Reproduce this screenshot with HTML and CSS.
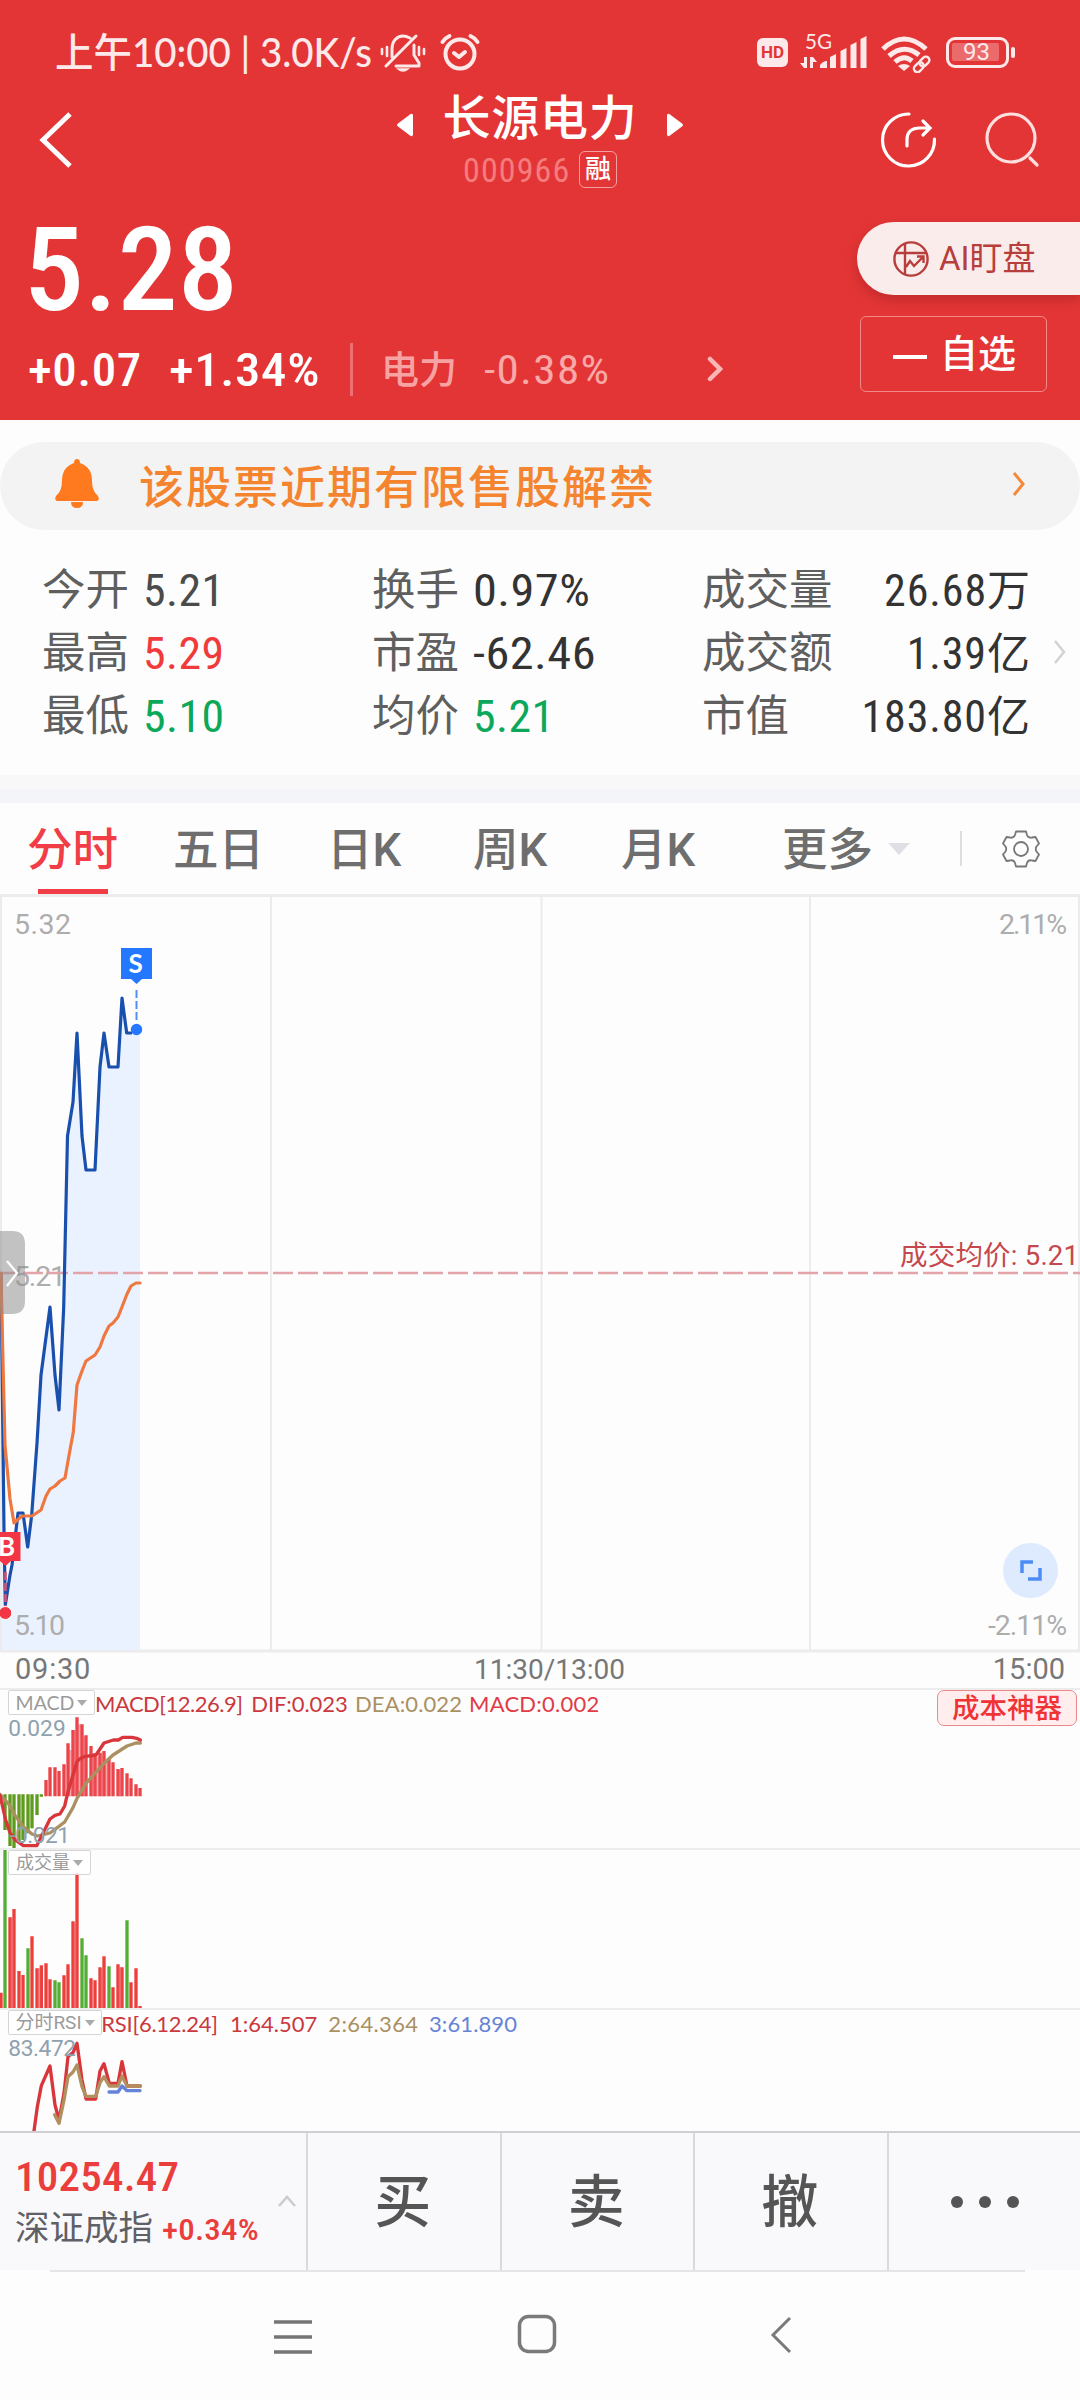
FILE: index.html
```
<!DOCTYPE html>
<html lang="zh-CN">
<head>
<meta charset="utf-8">
<title>长源电力 000966</title>
<link rel="stylesheet" href="styles.css">
</head>
<body>
<header class="header">
  <div class="status">
    <span class="status-text"><svg width="326" height="60"><text x="1" y="37" textLength="317" lengthAdjust="spacingAndGlyphs">上午10:00 | 3.0K/s</text></svg></span>
    <svg class="status-mute" width="46" height="42" viewBox="0 0 46 42" fill="none" stroke="#fde9e9" stroke-width="3" stroke-linecap="round">
      <path d="M6 33 36 3M12 24V16C12 8 17 3 23 3C26 3 28 4 30 5M34 12V22L39 30V33H16" stroke-linejoin="round"/>
      <path d="M2 16V21M7 14V23M44 16V21M39 14V22" stroke-width="2.6"/>
      <path d="M18 36H28Q23 40 18 36Z" fill="#fde9e9" stroke-width="1.5"/>
    </svg>
    <svg class="status-alarm" width="42" height="40" viewBox="0 0 42 40" fill="none" stroke="#fde9e9" stroke-width="4" stroke-linecap="round" stroke-linejoin="round">
      <circle cx="21" cy="21" r="14.5"/><path d="M15 20 20 24 26 19M3.500 9Q6 5 10.500 3M38.500 9Q36 5 31.500 3"/>
    </svg>
    <span class="hd">HD</span>
    <svg class="signal" width="72" height="50" viewBox="0 -6 72 50" fill="#fde9e9">
      <text x="5" y="18" font-size="21" textLength="27" lengthAdjust="spacingAndGlyphs">5G</text>
      <path d="M4 26h3v11h-3l-4-5h4zM10 37V26h3l4 5h-4v6z"/>
      <path d="M20 37v-3q3-4 7-4v7zM30 37V26l6-3v14zM40.500 37V20l6-3v20zM50.500 37V14l6-3v26zM60.500 37V8l6-3v32z"/>
    </svg>
    <svg class="wifi" width="52" height="38" viewBox="0 0 52 38" fill="none" stroke="#fde9e9" stroke-width="5">
      <path d="M3 14Q24-6 46 14M9 21Q24 8 39 20M15 27Q24 19 32 26"/><path d="M18 31Q24 27 30 31L24 36Z" fill="#fde9e9" stroke="none"/>
      <g stroke-width="2.400" transform="rotate(-45 42 29)"><rect x="32" y="25.500" width="11" height="7" rx="3.500"/><rect x="40" y="25.500" width="11" height="7" rx="3.500"/></g>
    </svg>
    <span class="battery"><span class="battery-fill">93</span></span><span class="battery-nub"></span>
  </div>

  <div class="nav">
    <svg class="back" width="34" height="58" viewBox="0 0 34 58" fill="none" stroke="#fff" stroke-width="5"><path d="M31 3 4 29 31 55"/></svg>
    <div class="title-block">
      <div class="title-row">
        <svg width="16" height="24" viewBox="0 0 16 24" fill="#fff"><path d="M16 2V22Q15 24 13 22.500L1 13.500Q-1 12 1 10.500L13 1.500Q15 0 16 2Z"/></svg>
        <h1 class="title">长源电力</h1>
        <svg width="16" height="24" viewBox="0 0 16 24" fill="#fff"><path d="M0 2V22Q1 24 3 22.500L15 13.500Q17 12 15 10.500L3 1.500Q1 0 0 2Z"/></svg>
      </div>
      <div class="code-row"><span class="code">000966</span><span class="margin-tag">融</span></div>
    </div>
    <svg class="share" width="58" height="58" viewBox="0 0 58 58" fill="none" stroke="#fff" stroke-width="3.200" stroke-linecap="round"><path d="M29 3A26 26 0 1 0 54.500 28M27 35V29Q27 17 40 17H48M43 10 50 17 43 24"/></svg>
    <svg class="search" width="56" height="58" viewBox="0 0 56 58" fill="none" stroke="#ffdede" stroke-width="3.200" stroke-linecap="round"><circle cx="27" cy="27" r="24"/><path d="M46 47 53 54"/></svg>
  </div>

  <div class="quote">
    <div class="quote-left">
      <div class="price">5.28</div>
      <div class="change-row">
        <span class="change">+0.07</span><span class="change pct">+1.34%</span><i class="vline"></i>
        <span class="sector">电力</span><span class="sector-pct">-0.38%</span>
        <svg width="16" height="26" viewBox="0 0 16 26" fill="none" stroke="#fbb6b6" stroke-width="4.500" stroke-linecap="round"><path d="M3 3 13 13 3 23"/></svg>
      </div>
    </div>
    <div class="quote-right">
      <div class="ai-pill">
        <svg width="38" height="38" viewBox="0 0 38 38" fill="none" stroke="#b83e3c" stroke-width="2.400"><circle cx="19" cy="19" r="16.600"/><path d="M3 13H35M13 3V35M14 27 18 21 22 26 31 17M25 16.500H31.500V23"/></svg>
        <span>AI盯盘</span>
      </div>
      <div class="watch-btn"><i class="dash"></i><span>自选</span></div>
    </div>
  </div>
</header>

<div class="notice">
  <svg width="46" height="50" viewBox="0 0 46 50" fill="#ff7a1f"><path d="M20 4Q20 0 23 0T26 4Q38 8 38 22Q38 32 44 37Q46 41 43 42H3Q0 41 2 37Q8 32 8 22Q8 8 20 4Z"/><path d="M17 43Q17 49 23 49T29 43Z"/></svg>
  <span class="notice-text">该股票近期有限售股解禁</span>
  <svg width="16" height="26" viewBox="0 0 16 26" fill="none" stroke="#f5883a" stroke-width="3"><path d="M3 2 12 13 3 24"/></svg>
</div>

<section class="stats">
  <dl class="col c1"><dt>今开</dt><dd class="mid">5.21</dd><dt>最高</dt><dd class="up">5.29</dd><dt>最低</dt><dd class="down">5.10</dd></dl>
  <dl class="col c2"><dt>换手</dt><dd class="wide">0.97%</dd><dt>市盈</dt><dd class="wide">-62.46</dd><dt>均价</dt><dd class="down">5.21</dd></dl>
  <dl class="col c3"><dt>成交量</dt><dd>26.68<b>万</b></dd><dt>成交额</dt><dd>1.39<b>亿</b></dd><dt>市值</dt><dd>183.80<b>亿</b></dd></dl>
  <svg width="16" height="26" viewBox="0 0 16 26" fill="none" stroke="#d2d2d2" stroke-width="2.500"><path d="M3 2 12 13 3 24"/></svg>
</section>
<div class="band"></div>

<nav class="tabs">
  <span class="tab active">分时</span><span class="tab">五日</span><span class="tab">日K</span><span class="tab">周K</span><span class="tab">月K</span><span class="tab">更多</span>
  <i class="caret"></i><i class="tab-line"></i>
  <svg width="38" height="38" viewBox="0 0 38 38" fill="none" stroke="#777" stroke-width="1.800" stroke-linejoin="round"><path d="M14 1.500H24L25 5Q26.500 8.500 30 7.500L33.500 7 37 13.500 34.500 16.500Q33 19 34.500 21.500L37 24.500 33.500 31 30 30.500Q26.500 29.500 25 33L24 36.500H14L13 33Q11.500 29.500 8 30.500L4.500 31 1 24.500 3.500 21.500Q5 19 3.500 16.500L1 13.500 4.500 7 8 7.500Q11.500 8.500 13 5Z"/><circle cx="19" cy="19" r="7"/></svg>
</nav>

<section class="chart">
  <svg width="1080" height="759" viewBox="0 894 1080 759" class="plot">
    <g stroke="#ececec" stroke-width="2" fill="none">
      <path d="M1 895V1651M271 895V1651M541.500 895V1651M810 895V1651M1079 895V1651"/><path d="M0 895.500H1080M0 1651H1080" stroke-width="3"/>
    </g>
    <path fill="#ebf2ff" d="M2 1273 4 1530 5.300 1608 10 1575 12 1565 18 1513H23L27.700 1547 31.700 1515 37 1443 41 1375 50 1307 59 1410 63.700 1307 67.500 1136 73 1102 77 1033 82 1136 86 1170H95L100 1067 104 1033 109 1067H118L122 998 126.700 1033H140V1650H2Z"/>
    <g class="axis">
      <text x="14" y="934" textLength="57">5.32</text><text x="14" y="1286" textLength="52">5.21</text><text x="14" y="1635" textLength="51">5.10</text>
      <text x="999" y="934" textLength="68">2.11%</text><text x="988" y="1635" textLength="79">-2.11%</text>
    </g>
    <path d="M-2 1273H1080" stroke="#e3a4a9" stroke-width="2.500" stroke-dasharray="20 5"/>
    <path fill="none" stroke="#1950ad" stroke-width="3.200" stroke-linejoin="round" d="M1 1273 4 1530 5.300 1605 10 1575 12 1565 18 1513H23L27.700 1547 31.700 1515 37 1443 41 1375 50 1307 55 1375 59 1410 63.700 1307 67.500 1136 73 1102 77 1033 82 1136 86 1170H95L100 1067 104 1033 109 1067H118L122 998 126.700 1033H132"/>
    <path fill="none" stroke="#ee7840" stroke-width="3.200" stroke-linejoin="round" stroke-linecap="round" d="M1 1273 2 1320 5 1445 10 1499 14 1523 22 1516H32L41 1510 46 1496 50 1489 55 1486 60 1481 65 1478 68 1461 73.300 1432 77 1385 82 1371 86 1361 95 1355 100 1347 104 1336 109 1326 113 1323 118 1317 122 1307 127 1294 131 1286 136 1283H140"/>
    <path d="M136.500 990V1022" stroke="#4d8ff5" stroke-width="2" stroke-dasharray="8 3"/>
    <circle cx="136.500" cy="1029.500" r="5.700" fill="#2478ff"/>
    <path d="M121 948H152V979H142L136.500 984 131 979H121Z" fill="#2478ff"/>
    <text class="flag" x="128.500" y="973" textLength="16">S</text>
    <path d="M5.500 1572V1608" stroke="#e05068" stroke-width="2.500" stroke-dasharray="8 3"/>
    <circle cx="5.300" cy="1613" r="6.500" fill="#f23645" stroke="#fff" stroke-width="1"/>
    <path d="M-10 1532H20.500V1561H11L5.500 1566 0 1561H-10Z" fill="#f23645"/>
    <text class="flag" x="-2" y="1556" textLength="15">B</text>
    <text x="900" y="1265" font-size="27.500" fill="#c5484e" textLength="179">成交均价: 5.21</text>
    <path d="M0 1231H12Q25 1231 25 1244V1301Q25 1314 12 1314H0Z" fill="#8c8c8c" fill-opacity=".52"/>
    <path d="M7 1261 17 1273 7 1286" fill="none" stroke="#fff" stroke-width="2.200"/>
    <circle cx="1030.500" cy="1570.500" r="27.500" fill="#deeafd"/>
    <path d="M1022 1573V1562H1033M1040 1568V1579H1028" fill="none" stroke="#4e8cf5" stroke-width="3.500"/>
  </svg>
</section>

<div class="times"><span>09:30</span><span>11:30/13:00</span><span>15:00</span></div>

<section class="pane macd">
  <svg width="1080" height="158" viewBox="0 60 3240 474" class="plot">
    <path class="bar" stroke="#5e9b1e" d="M15 373V480M30 373V528M42 373V540M57 373V520M69 373V510M84 373V490M96 373V475M111 373V435M124 373V380"/>
    <path class="bar" stroke="#ea4349" d="M138 330V379M150 292V379M165 292V379M177 303V379M192 283V379M204 220V379M219 180V379M231 142V379M246 163V379M258 196V379M273 228V379M285 250V379M300 248V379M312 243V379M327 265V379M339 277V379M354 297V379M366 294V379M381 310V379M393 325V379M408 343V379M420 354V379"/>
    <path class="bar soft" stroke="#ee5258" d="M212 240V379M225 180V379M238 163V379M252 200V379M279 260V379M292 260V379M306 250V379M320 270V379M360 300V379"/>
    <path class="ln" stroke="#ab9062" d="M0 373 30 407 44 435 70 470 96 492 112 498 150 489 165 478 194 456 219 413 231 385 258 340 285 310 312 280 339 255 381 228 408 219H421"/>
    <path class="ln" stroke="#d9363b" d="M0 376 10 420 17 450 30 488 44 508 70 527H110L124 500 150 447 165 436 180 432 194 408 204 365 219 315 231 275 240 266 252 260 288 255 312 219 340 210H355L368 202H396L410 205 421 210"/>
    <g class="val"><text x="25" y="198" textLength="172">0.029</text><text x="28" y="519" textLength="182">-0.021</text></g>
    <g class="legend">
      <text x="285" y="126" fill="#c9393d" textLength="444">MACD[12.26.9]</text><text x="754" y="126" fill="#c9393d" textLength="289">DIF:0.023</text>
      <text x="1065" y="126" fill="#ab9062" textLength="321">DEA:0.022</text><text x="1407" y="126" fill="#e13b46" textLength="391">MACD:0.002</text>
    </g>
  </svg>
  <div class="picker p1">MACD<i></i></div>
  <div class="cost">成本神器</div>
</section>

<section class="pane vol">
  <svg width="1080" height="158" viewBox="0 30 3240 474" class="plot">
    <path class="bar" stroke="#53ae35" d="M15 25V508M84 325V508M165 421V508M177 427V508M246 295V508M258 346V508M327 379V508M381 241V508"/>
    <path class="bar" stroke="#ec3f3b" d="M3 458V508M30 232V508M42 207V508M57 393V508M69 405V508M96 289V508M111 385V508M124 376V508M138 370V508M150 418V508M192 406V508M204 373V508M219 244V508M231 97V508M273 415V508M285 421V508M300 382V508M312 349V508M339 442V508M354 373V508M366 382V508M393 427V508M408 385V508M420 498V508"/>
    <path class="bar soft" stroke="#ee5258" d="M36 232V508M117 385V508M225 250V508M306 385V508M360 382V508"/>
  </svg>
  <div class="picker p2">成交量<i></i></div>
</section>

<section class="pane rsi">
  <svg width="1080" height="121" viewBox="0 510 3240 363" class="plot">
    <path class="ln" stroke="#d9363b" d="M102 873 112 800 124 737 150 678 165 795 177 840 192 760 204 650 219 638 231 610 246 720 258 777H287L300 693 312 671 328 730H354L366 665 381 738H421"/>
    <path class="ln" stroke="#b18f5e" d="M164 824 177 850 192 780 204 710 219 696 231 675 246 740 258 769H287L300 728 312 710 328 738H354L366 708 381 738H421"/>
    <path class="ln" stroke="#6683dc" d="M327 756H354L366 738 381 752H420"/>
    <g class="val"><text x="25" y="648" textLength="203">83.472</text></g>
    <g class="legend">
      <text x="304" y="576" fill="#c9393d" textLength="350">RSI[6.12.24]</text><text x="690" y="576" fill="#c9393d" textLength="262">1:64.507</text>
      <text x="985" y="576" fill="#ab9062" textLength="269">2:64.364</text><text x="1287" y="576" fill="#6683d5" textLength="264">3:61.890</text>
    </g>
  </svg>
  <div class="picker p3">分时RSI<i></i></div>
</section>

<footer class="actions">
  <div class="index">
    <div><div class="index-value">10254.47</div><div class="index-name">深证成指 <span>+0.34%</span></div></div>
    <svg width="20" height="14" viewBox="0 0 20 14" fill="none" stroke="#ccc" stroke-width="2.500"><path d="M2 12 10 3 18 12"/></svg>
  </div>
  <div class="act">买</div><div class="act">卖</div><div class="act">撤</div><div class="act more"><i></i><i></i><i></i></div>
</footer>

<div class="sysnav">
  <svg width="38" height="34" viewBox="0 0 38 34" stroke="#757575" stroke-width="3.500"><path d="M0 2H38M0 17H38M0 32H38"/></svg>
  <svg width="40" height="40" viewBox="0 0 40 40" fill="none" stroke="#7a7a7a" stroke-width="3.500"><rect x="2.500" y="2.500" width="35" height="35" rx="9"/></svg>
  <svg width="22" height="38" viewBox="0 0 22 38" fill="none" stroke="#7a7a7a" stroke-width="3"><path d="M20 2 3 19 20 36"/></svg>
</div>
</body>
</html>
```
FILE: styles.css
```
* { box-sizing: border-box; }
body { margin: 0; width: 1080px; height: 2400px; background: #fdfdfd; font-family: Roboto, "Noto Sans CJK SC", sans-serif; overflow: hidden; display: flex; flex-direction: column; }
svg { display: block; flex: none; }
h1, dl, dd { margin: 0; font-weight: 400; }

/* header */
.header { height: 420px; background: #e33536; color: #fff; }
.status { height: 93px; display: flex; align-items: flex-start; padding-left: 54px; color: #fde9e9; }
.status-text { margin-top: 30px; width: 320px; }
.status-text svg { overflow: visible; }
.status-text text { font: 500 40px Lato, "Noto Sans CJK SC", sans-serif; fill: #fde9e9; }
.status-mute { margin: 33px 0 0 6px; }
.status-alarm { margin: 33px 0 0 13px; }
.hd { margin: 38px 0 0 276px; width: 31px; height: 29px; border-radius: 6px; background: #fde9e9; color: #e33536; font: 700 17px/29px Roboto, sans-serif; text-align: center; }
.signal { margin: 25px 0 0 12px; }
.signal text { font-family: Lato, sans-serif; }
.wifi { margin: 35px 0 0 8px; }
.battery { margin: 37px 0 0 14px; width: 63px; height: 31px; border: 3.5px solid #fde9e9; border-radius: 9px; padding: 3px; }
.battery-fill { display: block; width: 47px; height: 18px; background: #eb6a6b; border-radius: 2px; font: 24px/18px Roboto, sans-serif; text-align: center; padding-left: 2px; }
.battery-nub { margin: 47px 0 0 2px; width: 4px; height: 11px; border-radius: 2px; background: #fde9e9; }

.nav { height: 111px; display: flex; align-items: flex-start; }
.back { margin: 18px 0 0 39px; }
.title-block { width: 286px; margin: -4px 0 0 324px; }
.title-row { display: flex; align-items: center; justify-content: space-between; height: 60px; }
.title-row svg { margin-top: 12px; }
.title { font-size: 48px; line-height: 60px; font-weight: 500; letter-spacing: .7px; }
.code-row { display: flex; padding-left: 66px; height: 40px; align-items: center; }
.code { width: 116px; font: 34px/38px "Roboto Condensed", sans-serif; letter-spacing: 1.1px; color: #f57c7d; padding-top: 1px; }
.margin-tag { width: 38px; height: 37px; border: 1.5px solid #f4a0a0; border-radius: 6px; font-size: 26px; line-height: 35px; text-align: center; font-weight: 500; }
.share { margin: 18px 0 0 197px; }
.search { margin: 18px 0 0 46px; }

.quote { display: flex; justify-content: space-between; }
.price { font: 500 117px/120px "Roboto Condensed", sans-serif; padding-left: 23px; margin-top: 6px; letter-spacing: 0; transform: scaleX(1.03); transform-origin: 0 0; }
.change-row { display: flex; align-items: center; margin-top: 11px; height: 56px; padding: 0 0 0 28px; }
.change { font: 500 47px/56px "Roboto Condensed", sans-serif; letter-spacing: .6px; width: 141px; padding-top: 2px; white-space: nowrap; transform: scaleX(1.04); transform-origin: 0 0; }
.pct { width: 181px; transform: scaleX(1.08); }
.vline { width: 3px; height: 53px; background: #ec7071; }
.sector { margin: -5px 0 0 28px; font-size: 38px; width: 103px; color: #f8a3a3; font-weight: 500; }
.sector-pct { font: 41px/56px "Roboto Condensed", sans-serif; letter-spacing: 1.2px; color: #f9a8a8; width: 223px; margin-top: 2px; transform: scaleX(1.1); transform-origin: 0 0; }
.quote-right { display: flex; flex-direction: column; align-items: flex-end; padding-top: 18px; }
.ai-pill { width: 223px; height: 73px; background: #faeceb; border-radius: 37px 0 0 37px; display: flex; align-items: center; padding-left: 35px; color: #b83e3c; font-size: 33px; box-shadow: 0 5px 12px rgba(120, 20, 20, .3); }
.ai-pill span { margin: -6px 0 0 9px; }
.watch-btn { width: 187px; height: 76px; margin: 21px 33px 0 0; border: 1.5px solid #f08a8a; border-radius: 6px; display: flex; align-items: center; padding-left: 32px; font-size: 38px; font-weight: 500; }
.watch-btn span { margin-top: -7px; }
.dash { width: 34px; height: 4px; background: #fff; margin: 6px 13px 0 0; }

/* notice */
.notice { height: 88px; margin: 22px 0 0; background: #f3f3f3; border-radius: 44px; display: flex; align-items: center; padding: 0 53px 0 54px; flex: none; }
.notice svg { margin-bottom: 4px; }
.notice-text { flex: 1; margin: -4px 0 0 39px; font-size: 45px; letter-spacing: 2px; color: #f5842e; font-weight: 500; }

/* figures */
.stats { height: 245px; flex: none; display: flex; padding: 29px 0 0 42px; align-items: flex-start; }
.col { display: grid; grid-template-rows: repeat(3, 63px); line-height: 63px; }
.c1 { grid-template-columns: 101px 229px; }
.c2 { grid-template-columns: 101px 229px; }
.c3 { grid-template-columns: 138px 190px; }
.col dt { font-size: 43.500px; color: #5f5f5f; white-space: nowrap; }
.col dd { font: 44px/64px "Roboto Condensed", "Noto Sans CJK SC", sans-serif; letter-spacing: .9px; color: #333; white-space: nowrap; }
.c1 dd, .c2 dd { letter-spacing: .4px; transform: scaleX(1.04); transform-origin: 0 0; }
.col .wide { transform: scaleX(1.1); }
.col .mid { color: #4b4b4b; }
.col .up { color: #f03a3c; }
.col .down { color: #0ca85a; }
.c3 dd { text-align: right; }
.c3 b { font-weight: 400; font-size: 43px; letter-spacing: 0; }
.stats > svg { margin: 80px 0 0 22px; }
.band { height: 28px; flex: none; background: linear-gradient(#f8f8f9 50%, #f3f5f9 50%); }

/* period tabs */
.tabs { height: 91px; flex: none; display: flex; align-items: center; padding-left: 27px; font-size: 45.500px; line-height: 88px; color: #6e6e6e; font-weight: 500; }
.tab { height: 91px; padding-top: 4px; white-space: nowrap; }
.tab:nth-child(1) { width: 146px; }
.tab:nth-child(2) { width: 154px; }
.tab:nth-child(3) { width: 146px; }
.tab:nth-child(4) { width: 148px; }
.tab:nth-child(5) { width: 161px; }
.tab:nth-child(6) { width: 106px; }
.active { color: #f13d46; position: relative; }
.active::after { content: ""; position: absolute; left: 11px; bottom: 0; width: 70px; height: 5px; background: #f13d46; }
.caret { border: 11.5px solid transparent; border-top: 12px solid #dfe0e6; border-bottom: 0; }
.tab-line { width: 1.500px; height: 35px; background: #ddd; margin: 0 40px 0 50px; }

/* charts */
.chart { height: 759px; flex: none; }
.plot { overflow: hidden; }
.axis text { font: 28.500px Roboto, sans-serif; fill: #adadad; }
.flag { font: 700 26px Lato, sans-serif; fill: #fff; }
.times { height: 37px; flex: none; display: grid; grid-template-columns: 1fr auto 1fr; padding: 0 15px; font: 29px/33px Roboto, sans-serif; color: #777; border-bottom: 2px solid #ececec; }
.times span:nth-child(2) { padding-left: 19px; font-size: 28px; }
.times span:first-child { letter-spacing: .8px; }
.times span:last-child { text-align: right; }
.pane { position: relative; flex: none; height: 160px; border-bottom: 2px solid #ececec; }
.rsi { height: 121px; border: 0; }
.bar { stroke-width: 10; fill: none; }
.bar.soft { stroke-width: 12; opacity: .5; }
.ln { stroke-width: 10; fill: none; stroke-linejoin: round; stroke-linecap: round; }
.val text { font: 68px Roboto, sans-serif; fill: #8fa1ae; }
.legend text { font: 66px Lato, sans-serif; }
.picker { position: absolute; left: 8px; top: 0; height: 25px; border: 1.500px solid #d5d5d5; border-radius: 2px; background: rgba(255, 255, 255, .9); display: flex; align-items: center; justify-content: center; font-size: 18px; line-height: 21px; color: #9a9a9a; white-space: nowrap; }
.p1 { width: 87px; font-family: Lato, sans-serif; font-size: 19.500px; }
.p2 { width: 83px; }
.p3 { width: 94px; font-size: 19px; }
.picker i { border: 5px solid transparent; border-top: 6px solid #aaa; border-bottom: 0; margin-left: 3px; }
.cost { position: absolute; right: 3px; top: 0; width: 140px; height: 36px; border: 1.500px solid #e88; border-radius: 7px; background: #ffeeed; color: #f03335; font-size: 27.500px; line-height: 35px; font-weight: 500; text-align: center; }

/* bottom bar */
.actions { height: 139px; flex: none; display: flex; background: #f9f9fc; border-top: 2px solid #cfcfd2; }
.index { width: 306px; display: flex; }
.index > div { width: 279px; padding-left: 15px; }
.index-value { font: 500 41px/48px "Roboto Condensed", sans-serif; letter-spacing: .2px; color: #ea3e3c; margin-top: 20px; transform: scaleX(1.05); transform-origin: 0 0; }
.index-name { font-size: 34.500px; line-height: 50px; color: #5f6066; margin-top: 2px; white-space: nowrap; }
.index-name span { display: inline-block; font: 500 30px "Roboto Condensed", sans-serif; letter-spacing: .2px; color: #ea3e3c; transform: scaleX(1.1); transform-origin: 0 0; }
.index svg { margin-top: 61px; margin-left: -2px; }
.act { flex: 1; border-left: 2px solid #d9d9dc; font-size: 57px; line-height: 140px; text-align: center; color: #555; font-weight: 500; padding-right: 2px; }
.more { display: flex; justify-content: center; gap: 16px; align-items: center; padding: 0 0 0 2px; }
.more i { width: 12px; height: 12px; border-radius: 50%; background: #555; }
.sysnav { margin: 0 55px 0 50px; border-top: 2px solid #e5e5e5; flex: 1; display: flex; align-items: flex-start; padding: 48px 0 0 224px; }
.sysnav svg:nth-child(2) { margin: -6px 0 0 205px; }
.sysnav svg:nth-child(3) { margin: -4px 0 0 213px; }
```
